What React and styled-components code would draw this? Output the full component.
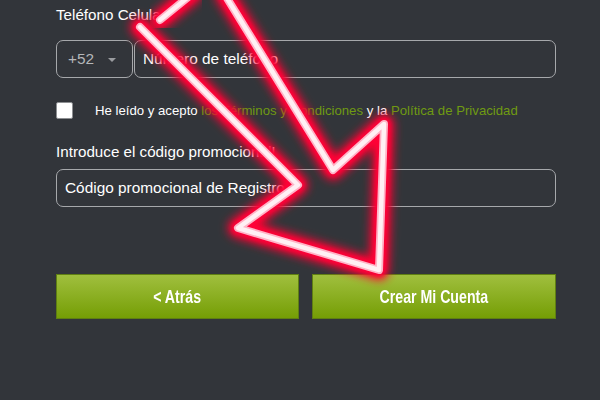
import React from "react";
import styled, { createGlobalStyle } from "styled-components";

const Global = createGlobalStyle`
  html, body { margin: 0; padding: 0; background: #32353a; }
  #root { width: 600px; height: 400px; overflow: hidden; }
`;

const Page = styled.div`
  position: relative;
  width: 600px;
  height: 400px;
  box-sizing: border-box;
  padding: 6px 44px 0 56px;
  background: #32353a;
  overflow: hidden;
  font-family: "Liberation Sans", Arial, sans-serif;
  color: #fff;
`;

const Label = styled.div`
  font-size: 15.2px;
  line-height: 18px;
  height: 18px;
  color: #fff;
`;

const PhoneRow = styled.div`
  display: flex;
  gap: 1px;
  margin-top: 16px;
`;

const Field = styled.div`
  box-sizing: border-box;
  height: 38px;
  border: 1px solid #a6a8ab;
  border-radius: 7px;
  display: flex;
  align-items: center;
  font-size: 15.4px;
  color: ${(p) => p.$color || "#fff"};
  flex: ${(p) => (p.$fixed ? "0 0 77px" : "1")};
  padding: 0 ${(p) => (p.$fixed ? "0 0 11px" : "0 0 8px")};
`;

const Caret = styled.span`
  width: 0;
  height: 0;
  margin-left: 14px;
  margin-top: 2px;
  border-left: 4px solid transparent;
  border-right: 4px solid transparent;
  border-top: 4px solid #9a9c9f;
`;

const TermsRow = styled.div`
  display: flex;
  align-items: center;
  margin-top: 23px;
  height: 18px;
`;

const Check = styled.span`
  box-sizing: border-box;
  width: 17px;
  height: 17px;
  background: #fff;
  border: 1px solid #8d8f92;
  border-radius: 2px;
  margin-right: 22px;
`;

const Terms = styled.span`
  font-size: 13.2px;
  color: #fff;
`;

const Green = styled.span`
  color: #6f9a12;
`;

const PromoLabel = styled(Label)`
  margin-top: 24px;
`;

const PromoField = styled(Field)`
  margin-top: 8px;
`;

const Buttons = styled.div`
  display: grid;
  grid-template-columns: 243px 1fr;
  gap: 13px;
  margin-top: 67px;
`;

const Button = styled.div`
  height: 45px;
  display: flex;
  align-items: center;
  justify-content: center;
  box-sizing: border-box;
  border: 1px solid #5f7f12;
  background: linear-gradient(#a0bf3e, #759e05);
`;

const ButtonText = styled.span`
  display: inline-block;
  white-space: nowrap;
  color: #fff;
  font-weight: 700;
  font-size: 19px;
  transform: scaleX(0.745);
`;

const Overlay = styled.svg`
  position: absolute;
  left: 0;
  top: 0;
  width: 600px;
  height: 400px;
  pointer-events: none;
`;

const arrow = "M140 27 L298 185 L238 228 L379 270 L384 124 L333 170 L225 -5";
const stub = "M160 20 L192 -6";

function Neon({ d }) {
  return (
    <>
      <path d={d} fill="none" stroke="#ff0033" strokeWidth="20" strokeLinejoin="round" strokeLinecap="round" filter="url(#glowWide)" />
      <path d={d} fill="none" stroke="#ff0538" strokeWidth="13" strokeLinejoin="round" strokeLinecap="round" filter="url(#glowNear)" />
      <path d={d} fill="none" stroke="#ffb3c6" strokeWidth="8" strokeLinejoin="round" strokeLinecap="round" filter="url(#glowCore)" />
      <path d={d} fill="none" stroke="#fff0f4" strokeWidth="4.5" strokeLinejoin="round" strokeLinecap="round" />
    </>
  );
}

export default function App() {
  return (
    <Page>
      <Global />
      <Label>Teléfono Celular</Label>
      <PhoneRow>
        <Field $fixed $color="#b5b7b9">
          +52
          <Caret />
        </Field>
        <Field>Número de teléfono</Field>
      </PhoneRow>
      <TermsRow>
        <Check />
        <Terms>
          He leído y acepto <Green>los Términos y Condiciones</Green> y la <Green>Política de Privacidad</Green>
        </Terms>
      </TermsRow>
      <PromoLabel>Introduce el código promocional!</PromoLabel>
      <PromoField>Código promocional de Registro</PromoField>
      <Buttons>
        <Button><ButtonText>&lt; Atrás</ButtonText></Button>
        <Button><ButtonText>Crear Mi Cuenta</ButtonText></Button>
      </Buttons>
      <Overlay viewBox="0 0 600 400">
        <defs>
          <filter id="glowWide" x="-30%" y="-30%" width="160%" height="160%">
            <feGaussianBlur stdDeviation="5" />
          </filter>
          <filter id="glowNear" x="-30%" y="-30%" width="160%" height="160%">
            <feGaussianBlur stdDeviation="2" />
          </filter>
          <filter id="glowCore" x="-30%" y="-30%" width="160%" height="160%">
            <feGaussianBlur stdDeviation="0.7" />
          </filter>
        </defs>
        <Neon d={arrow} />
        <Neon d={stub} />
      </Overlay>
    </Page>
  );
}
